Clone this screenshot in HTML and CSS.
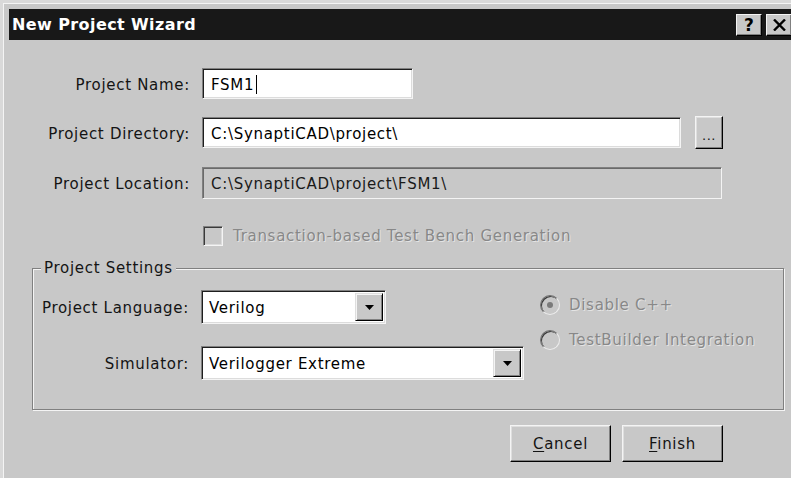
FILE: index.html
```html
<!DOCTYPE html>
<html>
<head>
<meta charset="utf-8">
<title>New Project Wizard</title>
<link rel="stylesheet" href="styles.css">
</head>
<body>
<div class="window">
  <div class="titlebar">
    <span class="title">New Project Wizard</span>
    <div class="caption-btns">
      <span class="cbtn">?</span>
      <span class="cbtn cbtn-close">
        <svg width="13" height="12" viewBox="0 0 13 12"><path d="M1 0.5 L12 11.5 M12 0.5 L1 11.5" stroke="#000" stroke-width="2.4" fill="none"/></svg>
      </span>
    </div>
  </div>

  <div class="content">
    <div class="row row-name">
      <span class="lbl">Project Name:</span>
      <div class="edit edit-name"><span>FSM1</span><span class="caret"></span></div>
    </div>

    <div class="row row-dir">
      <span class="lbl">Project Directory:</span>
      <div class="edit edit-dir"><span>C:\SynaptiCAD\project\</span></div>
      <button class="btn btn-browse">...</button>
    </div>

    <div class="row row-loc">
      <span class="lbl">Project Location:</span>
      <div class="edit edit-loc"><span>C:\SynaptiCAD\project\FSM1\</span></div>
    </div>

    <div class="row row-check">
      <span class="lbl"></span>
      <span class="checkbox"></span>
      <span class="disabled-text">Transaction-based Test Bench Generation</span>
    </div>

    <fieldset class="group">
      <legend class="group-title">Project Settings</legend>
      <div class="settings">
        <div class="settings-grid">
          <span class="lbl">Project Language:</span>
          <div class="combo combo-lang">
            <span class="combo-text">Verilog</span>
            <span class="combo-arrow"><svg width="9" height="5" viewBox="0 0 9 5"><path d="M0 0 H9 L4.5 5 Z" fill="#000"/></svg></span>
          </div>
          <span class="lbl">Simulator:</span>
          <div class="combo combo-sim">
            <span class="combo-text">Verilogger Extreme</span>
            <span class="combo-arrow"><svg width="9" height="5" viewBox="0 0 9 5"><path d="M0 0 H9 L4.5 5 Z" fill="#000"/></svg></span>
          </div>
        </div>
        <div class="radios">
          <div class="radio-row"><span class="radio checked"></span><span class="disabled-text">Disable C++</span></div>
          <div class="radio-row"><span class="radio"></span><span class="disabled-text">TestBuilder Integration</span></div>
        </div>
      </div>
    </fieldset>

    <div class="actions">
      <button class="btn btn-action"><u>C</u>ancel</button>
      <button class="btn btn-action"><u>F</u>inish</button>
    </div>
  </div>
</div>
</body>
</html>
```

FILE: styles.css
```css
html, body {
  margin: 0;
  padding: 0;
  background: #c8c8c8;
  overflow: hidden;
}

body {
  width: 791px;
  height: 478px;
  font-family: "DejaVu Sans", Verdana, sans-serif;
  font-size: 15px;
  letter-spacing: 0.7px;
  color: #141414;
}

/* outer window frame */
.window {
  box-sizing: border-box;
  height: 478px;
  border-top: 3px solid #d9d9d9;
  border-left: 3px solid #d9d9d9;
  box-shadow: inset 1px 1px 0 #f4f4f4;
  padding: 6px 0 0 6px;
  background: #c8c8c8;
}

/* caption bar */
.titlebar {
  height: 31px;
  background: #181818;
  display: flex;
  align-items: center;
  justify-content: space-between;
  padding-left: 3px;
}

.title {
  color: #fff;
  font-weight: bold;
  font-size: 16px;
  letter-spacing: 0.4px;
}

.caption-btns {
  display: flex;
  gap: 4px;
}

.cbtn {
  box-sizing: border-box;
  width: 26px;
  height: 22px;
  background: #c8c8c8;
  border-top: 1px solid #f4f4f4;
  border-left: 1px solid #f4f4f4;
  border-right: 1px solid #000;
  border-bottom: 1px solid #000;
  box-shadow: inset -1px -1px 0 #808080;
  display: flex;
  align-items: center;
  justify-content: center;
  font-weight: bold;
  font-size: 17px;
  letter-spacing: 0;
  color: #000;
}

.cbtn-close {
  width: 25px;
  border-right: none;
}

/* dialog body */
.content {
  padding-top: 28px;
}

.row {
  display: flex;
  align-items: center;
}

.lbl {
  box-sizing: border-box;
  width: 181px;
  margin-right: 12px;
  padding-top: 2px;
  text-align: right;
  white-space: nowrap;
}

.row-dir { margin-top: 17px; }
.row-loc { margin-top: 18px; }
.row-check { margin-top: 27px; height: 20px; }

/* sunken edit fields */
.edit {
  box-sizing: border-box;
  height: 31px;
  background: #fff;
  border-top: 1px solid #808080;
  border-left: 1px solid #808080;
  border-right: 1px solid #f4f4f4;
  border-bottom: 1px solid #f4f4f4;
  box-shadow: inset 1px 1px 0 #1e1e1e, inset -1px -1px 0 #dcdcdc;
  display: flex;
  align-items: center;
  padding: 2px 0 0 8px;
  color: #000;
  white-space: nowrap;
}

.edit-name { width: 211px; }
.edit-dir { width: 479px; }
.edit-loc {
  width: 520px;
  height: 32px;
  background: #c8c8c8;
  box-shadow: inset 1px 1px 0 #6a6a6a, inset -1px -1px 0 #c8c8c8;
  color: #1a1a1a;
}

.caret {
  display: inline-block;
  width: 1px;
  height: 19px;
  background: #000;
  margin-left: 2px;
}

/* raised push buttons */
.btn {
  box-sizing: border-box;
  background: #c8c8c8;
  border-top: 1px solid #f4f4f4;
  border-left: 1px solid #f4f4f4;
  border-right: 1px solid #000;
  border-bottom: 1px solid #000;
  box-shadow: inset -1px -1px 0 #808080, inset 1px 1px 0 #dedede;
  font-family: "DejaVu Sans", Verdana, sans-serif;
  font-size: 15px;
  letter-spacing: 0.7px;
  color: #141414;
  padding: 0;
  margin: 0;
}

.btn-browse {
  width: 28px;
  height: 33px;
  margin-left: 14px;
  font-size: 13px;
  padding-top: 6px;
  letter-spacing: 0.5px;
}

.btn-action {
  width: 101px;
  height: 37px;
}

.btn-action u {
  text-decoration-thickness: 1px;
  text-underline-offset: 2px;
}

/* disabled check box */
.checkbox {
  box-sizing: border-box;
  width: 20px;
  height: 20px;
  margin-left: 1px;
  background: #c8c8c8;
  border-top: 1px solid #808080;
  border-left: 1px solid #808080;
  border-right: 1px solid #f4f4f4;
  border-bottom: 1px solid #f4f4f4;
  box-shadow: inset 1px 1px 0 #3a3a3a, inset -1px -1px 0 #dcdcdc;
}

.disabled-text {
  color: #888;
  text-shadow: 1px 1px 0 #e4e4e4;
  white-space: nowrap;
}

.row-check .disabled-text { margin-left: 10px; }

/* group box */
.group {
  margin: 14px 7px 0 23px;
  padding: 13px 0 29px 0;
  border: 1px solid #808080;
  box-shadow: inset 1px 1px 0 #f4f4f4, 1px 1px 0 #f4f4f4;
  min-width: 0;
}

.group-title {
  padding: 0 3px;
  margin-left: 8px;
  background: #c8c8c8;
  line-height: 17px;
}

.settings {
  display: flex;
  align-items: flex-start;
}

.settings-grid {
  display: grid;
  grid-template-columns: 156px auto;
  column-gap: 12px;
  row-gap: 22px;
  align-items: center;
}

.settings-grid .lbl {
  width: auto;
  margin: 0;
}

/* drop-down combos */
.combo {
  box-sizing: border-box;
  height: 34px;
  background: #fff;
  border-top: 1px solid #808080;
  border-left: 1px solid #808080;
  border-right: 1px solid #f4f4f4;
  border-bottom: 1px solid #f4f4f4;
  box-shadow: inset 1px 1px 0 #1e1e1e, inset -1px -1px 0 #dcdcdc;
  display: flex;
  align-items: center;
  justify-content: space-between;
  padding: 2px 2px 2px 7px;
  color: #000;
}

.combo-text { padding-top: 2px; }

.combo-lang { width: 185px; justify-self: start; }
.combo-sim { width: 323px; }

.combo-arrow {
  box-sizing: border-box;
  width: 28px;
  height: 28px;
  background: #c8c8c8;
  border-top: 1px solid #dedede;
  border-left: 1px solid #dedede;
  border-right: 1px solid #000;
  border-bottom: 1px solid #000;
  box-shadow: inset 1px 1px 0 #f4f4f4, inset -1px -1px 0 #808080;
  display: flex;
  align-items: center;
  justify-content: center;
}

/* disabled radio buttons */
.radios {
  margin-left: 16px;
  margin-top: 5px;
  display: flex;
  flex-direction: column;
  gap: 15px;
}

.radio-row {
  display: flex;
  align-items: center;
  gap: 9px;
}

.radio {
  box-sizing: border-box;
  width: 20px;
  height: 20px;
  border-radius: 50%;
  background: #c8c8c8;
  border: 1px solid;
  border-color: #707070 #ececec #ececec #707070;
  box-shadow: inset 1px 1px 0 #3a3a3a;
  display: flex;
  align-items: center;
  justify-content: center;
}

.radio.checked::after {
  content: "";
  width: 6px;
  height: 6px;
  border-radius: 50%;
  background: #7a7a7a;
}

/* bottom buttons */
.actions {
  display: flex;
  justify-content: flex-end;
  gap: 11px;
  margin: 15px 68px 0 0;
}
```
